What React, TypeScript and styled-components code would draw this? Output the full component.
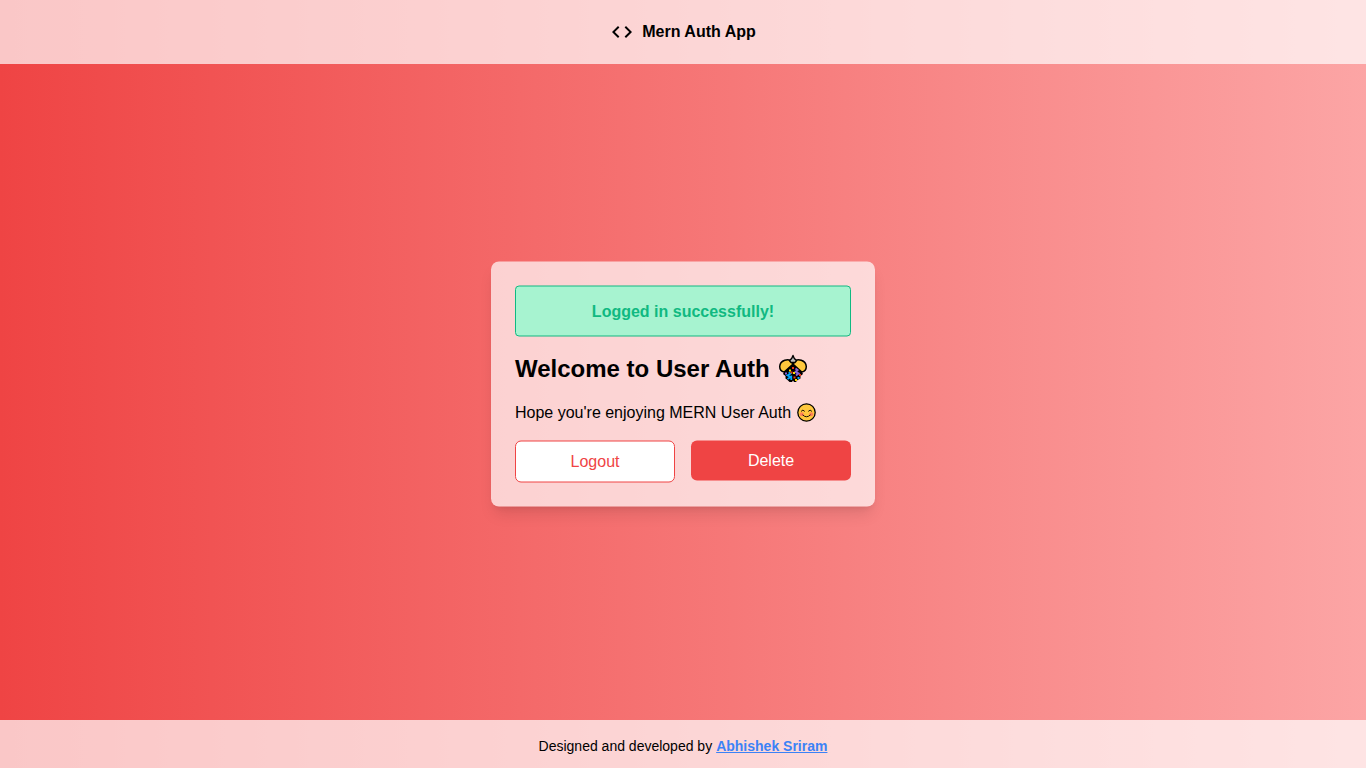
import React from 'react';
import styled, { createGlobalStyle } from 'styled-components';
import { MdCode } from 'react-icons/md';

const GlobalStyle = createGlobalStyle`
  *, *::before, *::after { box-sizing: border-box; }
  body {
    margin: 0;
    font-family: Arial, "Liberation Sans", sans-serif;
    font-size: 16px;
    line-height: 24px;
    color: #000;
  }
  h1, p { margin: 0; }
`;

const Page = styled.div`
  display: flex;
  flex-direction: column;
  height: 100vh;
  background: linear-gradient(to right, #ef4444, #fca5a5);
`;

const Header = styled.header`
  display: flex;
  align-items: center;
  justify-content: center;
  gap: 8px;
  height: 64px;
  flex: none;
  background: rgba(255, 255, 255, 0.7);
  font-weight: 700;
`;

const Main = styled.main`
  flex: 1;
  display: flex;
  align-items: center;
  justify-content: center;
  padding-bottom: 17px;
`;

const Card = styled.section`
  display: flex;
  flex-direction: column;
  gap: 16px;
  width: 384px;
  padding: 24px;
  border-radius: 8px;
  background: rgba(255, 255, 255, 0.7);
  box-shadow: 0 10px 15px -3px rgba(0, 0, 0, 0.1), 0 4px 6px -4px rgba(0, 0, 0, 0.1);
  transform: translateY(0.5px);
`;

const Alert = styled.div`
  height: 51px;
  display: flex;
  align-items: center;
  justify-content: center;
  border: 1px solid #10b981;
  border-radius: 4px;
  background: #a7f3d0;
  color: #10b981;
  font-weight: 700;
`;

const Title = styled.h1`
  display: flex;
  align-items: center;
  gap: 7px;
  font-size: 24px;
  line-height: 32px;
  font-weight: 700;
`;

const Message = styled.p`
  display: flex;
  align-items: center;
  gap: 4px;
`;

const Actions = styled.div`
  display: grid;
  grid-template-columns: 1fr 1fr;
  align-items: start;
  gap: 16px;
`;

const Button = styled.button<{ $outlined?: boolean }>`
  padding: 8px 16px;
  border: ${({ $outlined }) => ($outlined ? '1px solid #ef4444' : '0')};
  border-radius: 6px;
  background: ${({ $outlined }) => ($outlined ? '#fff' : '#ef4444')};
  color: ${({ $outlined }) => ($outlined ? '#ef4444' : '#fff')};
  font: inherit;
`;

const Footer = styled.footer`
  display: flex;
  align-items: center;
  justify-content: center;
  gap: 4px;
  height: 48px;
  flex: none;
  padding-top: 4px;
  background: rgba(255, 255, 255, 0.7);
  font-size: 14px;
  line-height: 20px;
`;

const AuthorLink = styled.a`
  color: #3b82f6;
  font-weight: 700;
  text-decoration: underline;
`;

const ConfettiBall = () => (
  <svg width="32" height="30" viewBox="0 0 32 30" aria-hidden="true">
    <path d="M7 18.500 14 11h4l7 7.500 1 2-2.500 2v2.500l-3 1.500-1.500 2H17l-1-1.500-1 1.500h-2.500L10.500 26.500 8.500 25v-2.500L6 20.500z" fill="#000" />
    <path d="M15 8C11.500 4.500 3.200 6.500 2.700 13c0 2.800 1.800 5 4.500 5.500L15.500 11z" fill="#ffc83d" stroke="#000" strokeWidth="1.500" strokeLinejoin="round" />
    <path d="M17 8c3.500-3.500 11.800-1.500 12.300 5 0 2.800-1.800 5-4.500 5.500L16.500 11z" fill="#ffc83d" stroke="#000" strokeWidth="1.500" strokeLinejoin="round" />
    <path d="m16 2 1.200 2.800 2.300 2.400L18 9h-4l-1.500-1.800 2.300-2.400z" fill="#bdbdbd" stroke="#000" strokeWidth="1.400" strokeLinejoin="round" />
    <path d="m11.500 19 2 1-3 2 3 1.500-3 2M14.300 22v4.500" fill="none" stroke="#00a8ff" strokeWidth="1.800" />
    <path d="m18.500 15 2 1.500-2 2 3 1.500-2.500 2" fill="none" stroke="#8764d8" strokeWidth="2" />
    <g fill="#f03a17">
      <rect x="15" y="13.500" width="2" height="2" />
      <rect x="13.500" y="18" width="2" height="2" />
      <rect x="16.500" y="23" width="2" height="2" />
      <rect x="22" y="20.500" width="2" height="2" />
    </g>
    <g fill="#ffdc00">
      <rect x="12" y="16" width="2" height="2" />
      <rect x="16" y="18.500" width="2" height="2" />
      <rect x="18" y="25.500" width="2" height="2" />
    </g>
    <rect x="8" y="19" width="2" height="2" fill="#8764d8" />
    <rect x="20.500" y="23.500" width="2" height="2" fill="#00a8ff" />
  </svg>
);

const SmileyFace = () => (
  <svg width="22" height="22" viewBox="-0.5 0 22 22" aria-hidden="true">
    <circle cx="11" cy="11" r="8.700" fill="#ffc83d" stroke="#000" strokeWidth="1.300" />
    <circle cx="6.300" cy="12.700" r="2" fill="#ff8157" />
    <circle cx="15.700" cy="12.700" r="2" fill="#ff8157" />
    <g fill="none" stroke="#000" strokeWidth="0.900" strokeLinecap="round">
      <path d="M5.800 9.600q1.600-2.300 3.200 0M13 9.600q1.600-2.300 3.200 0M7.300 13.600q3.700 3.600 7.400 0" />
    </g>
  </svg>
);

export default function App() {
  return (
    <>
      <GlobalStyle />
      <Page>
        <Header>
          <MdCode size={24} />
          <span>Mern Auth App</span>
        </Header>
        <Main>
          <Card>
            <Alert>Logged in successfully!</Alert>
            <Title>
              Welcome to User Auth
              <ConfettiBall />
            </Title>
            <Message>
              Hope you're enjoying MERN User Auth
              <SmileyFace />
            </Message>
            <Actions>
              <Button $outlined>Logout</Button>
              <Button>Delete</Button>
            </Actions>
          </Card>
        </Main>
        <Footer>
          <span>Designed and developed by</span>
          <AuthorLink>Abhishek Sriram</AuthorLink>
        </Footer>
      </Page>
    </>
  );
}
